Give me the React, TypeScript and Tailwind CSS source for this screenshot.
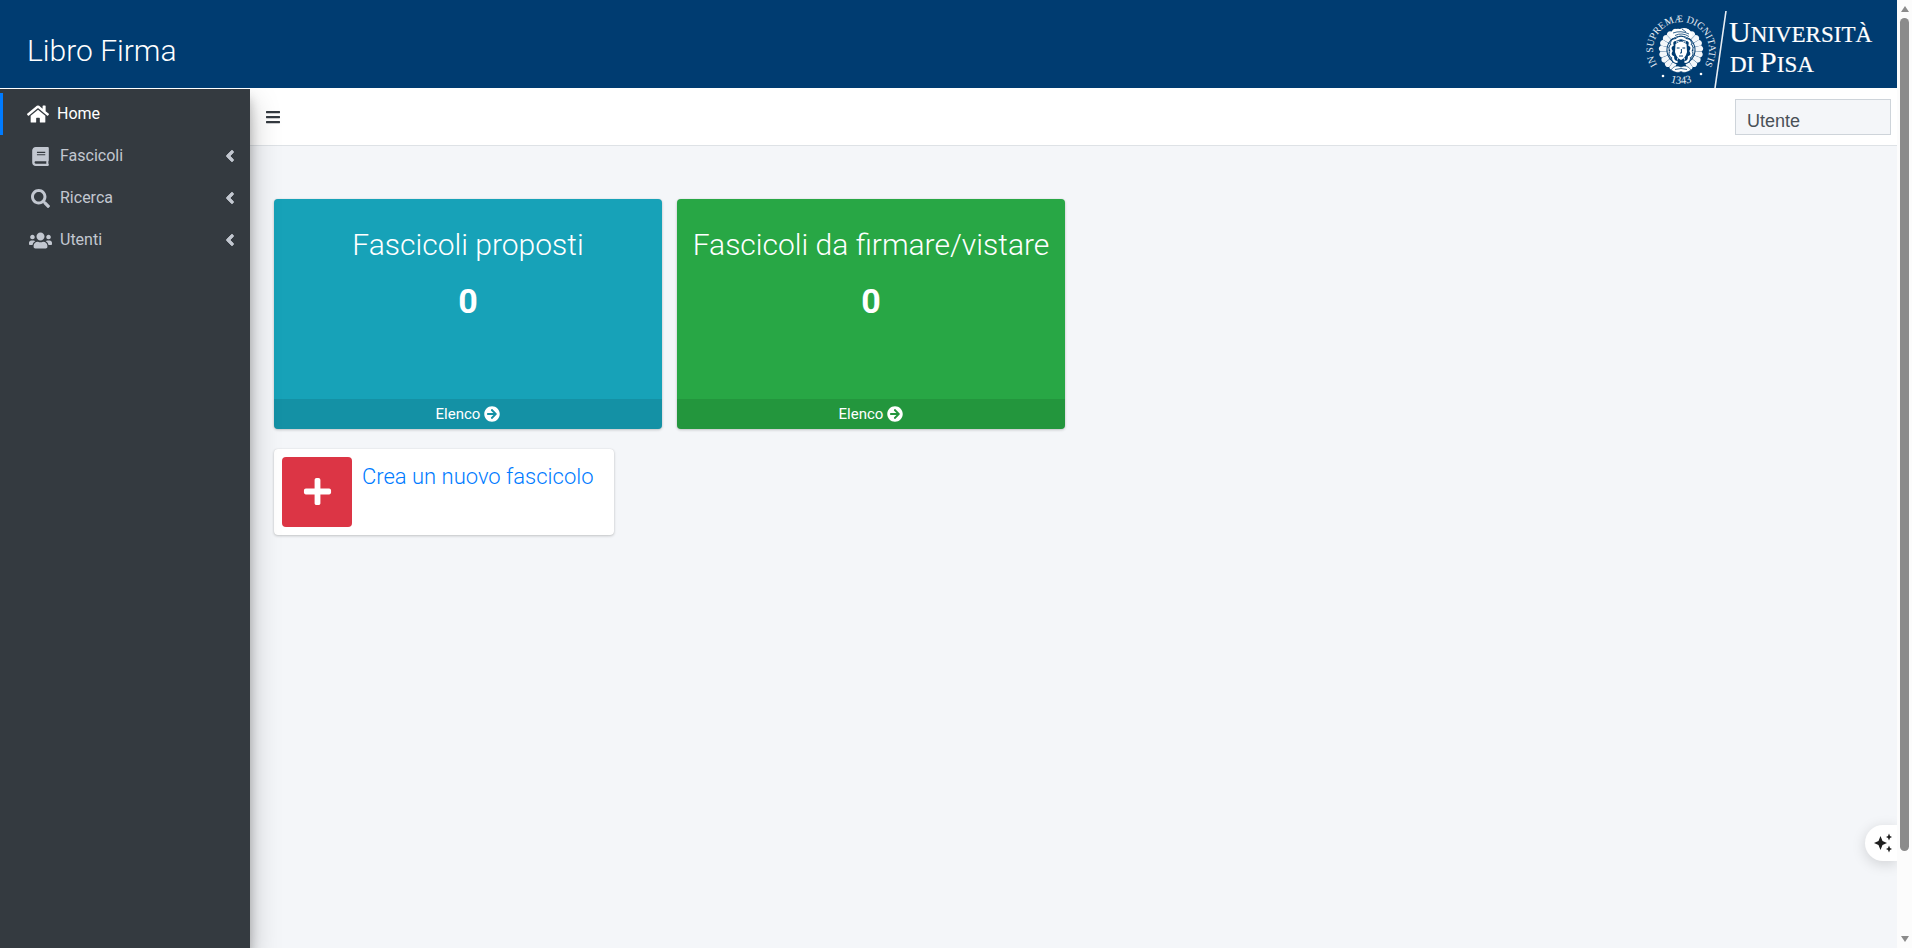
import { useState } from "react";
import {
  FaAngleLeft,
  FaArrowCircleRight,
  FaBars,
  FaBook,
  FaHome,
  FaPlus,
  FaSearch,
  FaUsers,
} from "react-icons/fa";

const menu = [
  { label: "Fascicoli", icon: FaBook, size: 19 },
  { label: "Ricerca", icon: FaSearch, size: 19 },
  { label: "Utenti", icon: FaUsers, size: 23 },
];

const boxes = [
  { title: "Fascicoli proposti", count: 0, color: "bg-[#17a2b8]" },
  { title: "Fascicoli da firmare/vistare", count: 0, color: "bg-[#28a745]" },
];

// feathers fan out from the centre of the seal on both sides
const feathers = [-72, -55, -38, -21, -4, 13, 30, 47, 64];

function Seal() {
  return (
    <g transform="translate(44 50)">
      <defs>
        <path id="motto" d="M-17 22.2 A28 28 0 1 1 17 22.2" />
        <path id="year" d="M-24 24 A34 34 0 0 0 24 24" />
      </defs>
      <text fontSize="10" fill="#e6edf4">
        <textPath href="#motto" startOffset="50%" textAnchor="middle">IN SUPREMÆ DIGNITATIS</textPath>
      </text>
      <text fontSize="11" fill="#e6edf4">
        <textPath href="#year" startOffset="50%" textAnchor="middle">1343</textPath>
      </text>
      <circle cx="-18" cy="26" r="1.3" fill="#fff" />
      <circle cx="20" cy="24" r="1.3" fill="#fff" />
      {[1, -1].map((side) => (
        <g key={side} transform={`scale(${side} 1)`}>
          {feathers.map((a) => (
            <g key={a} transform={`rotate(${a})`}>
              <path d="M14.5 -2 L20.5 -3 Q24 0 20.5 3 L14.5 2 Z" fill="#f4f7fa" />
              <path d="M8.5 -1.2 L13.5 -1.8 V1.8 L8.5 1.2 Z" fill="#f4f7fa" />
            </g>
          ))}
        </g>
      ))}
      <path d="M-11 -16 Q-8 -22 -1 -21 Q6 -24 11 -17 Q12 -13 8 -12 Q0 -17 -8 -12 Q-11 -13 -11 -16Z" fill="#fff" />
      <path d="M-8 -17 Q0 -20 8 -16 M-6 -14.5 Q1 -18 8 -13.5 M1 -21 L5 -18" fill="none" stroke="#003c71" strokeWidth="0.8" />
      <path
        d="M-5 -10 Q-10 -10 -8.5 -5 Q-12 -3 -9.5 1 Q-12 5 -8 7 Q-8 12 -3.5 12 M5 -10 Q10 -10 8.5 -5 Q12 -3 9.5 1 Q12 5 8 7 Q8 12 3.5 12 M-5 -10 Q0 -14 5 -10"
        fill="#003c71"
        stroke="#003c71"
        strokeWidth="4"
      />
      <path
        d="M-5 -10 Q-10 -10 -8.5 -5 Q-12 -3 -9.5 1 Q-12 5 -8 7 Q-8 12 -3.5 12 M5 -10 Q10 -10 8.5 -5 Q12 -3 9.5 1 Q12 5 8 7 Q8 12 3.5 12 M-5 -10 Q0 -14 5 -10"
        fill="none"
        stroke="#fff"
        strokeWidth="2.2"
      />
      <path d="M-5.5 -6 Q0 -11 5.5 -6 L6 2 Q4.5 8 0 10 Q-4.5 8 -6 2Z" fill="#fff" />
      <path d="M-4.2 -2 H-1.4 M1.4 -2 H4.2 M0.4 -1 V3 H-1 M-2 6 H2" fill="none" stroke="#003c71" strokeWidth="1" />
      <path d="M-10 20 Q-6 14 0 17 Q6 14 10 20 Q4 24 0 21.5 Q-4 24 -10 20Z" fill="#fff" stroke="#003c71" strokeWidth="0.6" />
      <path d="M-6 19.5 Q0 17.5 6 19.5" fill="none" stroke="#003c71" strokeWidth="0.8" />
    </g>
  );
}

function Logo() {
  return (
    <svg
      width="244"
      height="88"
      viewBox="0 0 244 88"
      role="img"
      aria-label="Università di Pisa"
      fontFamily="'Liberation Serif', serif"
    >
      <Seal />
      <path d="M89 11 L78 88" stroke="#e8eef4" strokeWidth="1.6" />
      <g fill="#fff" stroke="#fff" strokeWidth="0.2">
        <text x="92" y="42" fontSize="30">
          U<tspan fontSize="23">NIVERSITÀ</tspan>
        </text>
        <text x="93" y="72" fontSize="23">
          DI <tspan fontSize="30">P</tspan>ISA
        </text>
      </g>
    </svg>
  );
}

function Sidebar() {
  return (
    <aside className="z-10 w-[250px] shrink-0 bg-[#343a40] pt-1 text-[16px] text-[#c2c7d0] shadow-[0_14px_28px_rgba(0,0,0,0.25),0_10px_10px_rgba(0,0,0,0.22)]">
      <nav>
        <a href="#" className="flex h-[42px] items-center gap-2 border-l-[3px] border-[#007bff] pl-6 text-white">
          <FaHome size={22} />
          Home
        </a>
        {menu.map(({ label, icon: Icon, size }) => (
          <a key={label} href="#" className="flex h-[42px] items-center pr-[11px] pl-7">
            <span className="flex w-6 justify-center">
              <Icon size={size} />
            </span>
            <span className="ml-2 flex-1">{label}</span>
            <FaAngleLeft size={18} stroke="currentColor" strokeWidth={24} />
          </a>
        ))}
      </nav>
    </aside>
  );
}

function InfoBox({ title, count, color }: { title: string; count: number; color: string }) {
  return (
    <section
      className={`flex h-[230px] w-[388px] flex-col overflow-hidden rounded text-center text-white shadow-[0_0_1px_rgba(0,0,0,0.13),0_1px_3px_rgba(0,0,0,0.2)] ${color}`}
    >
      <div className="flex-1 pt-[26px]">
        <h3 className="text-[30px] leading-10 font-light">{title}</h3>
        <p className="mt-4 text-[34px] leading-10 font-bold">{count}</p>
      </div>
      <a href="#" className="flex h-[30px] items-center justify-center gap-1 bg-black/10 text-[15px]">
        Elenco <FaArrowCircleRight size={16} />
      </a>
    </section>
  );
}

function Scrollbar() {
  return (
    <div className="flex w-[15px] shrink-0 flex-col items-center bg-[#fcfcfc] py-[6px]">
      <svg width="8" height="6" viewBox="0 0 8 6">
        <path d="M4 0 L8 6 H0Z" fill="#8b8b8b" />
      </svg>
      <div className="mt-[6px] h-[89%] w-[9px] rounded-full bg-[#8b8b8b]" />
      <svg className="mt-auto" width="8" height="6" viewBox="0 0 8 6">
        <path d="M4 6 L8 0 H0Z" fill="#8b8b8b" />
      </svg>
    </div>
  );
}

export default function App() {
  const [open, setOpen] = useState(true);

  return (
    <div className="flex min-h-screen bg-[#f4f6f9] font-[Roboto,sans-serif]">
      <div className="relative flex min-w-0 flex-1 flex-col overflow-hidden">
        <header className="z-20 flex h-[89px] shrink-0 items-center justify-between border-b border-white bg-[#003c71] pr-4 pl-[27px]">
          <h1 className="pt-3 text-[30px] font-light text-white">Libro Firma</h1>
          <Logo />
        </header>

        <div className="flex flex-1">
          {open && <Sidebar />}
          <div className="flex-1">
            <div className="flex h-[57px] items-center justify-between border-b border-[#dee2e6] bg-white pr-[6px] pl-[15px]">
              <button type="button" aria-label="Menu" onClick={() => setOpen(!open)}>
                <FaBars size={16} className="text-[#343a40]" />
              </button>
              <input
                type="text"
                aria-label="Utente"
                defaultValue="Utente"
                className="h-9 w-[156px] border border-[#ced4da] bg-[#f4f6f9] px-[11px] pt-2 font-[Liberation_Sans,sans-serif] text-[18px] text-[#495057]"
              />
            </div>

            <main className="px-6 pt-[53px]">
              <div className="flex flex-wrap gap-[15px]">
                {boxes.map((box) => (
                  <InfoBox key={box.title} {...box} />
                ))}
              </div>
              <a
                href="#"
                className="mt-5 flex w-[340px] gap-[10px] rounded bg-white p-2 text-[#007bff] shadow-[0_0_1px_rgba(0,0,0,0.13),0_1px_3px_rgba(0,0,0,0.2)]"
              >
                <span className="flex size-[70px] shrink-0 items-center justify-center rounded bg-[#dc3545] pb-0.5 text-white">
                  <FaPlus size={31} />
                </span>
                <span className="text-[22px] leading-10 font-light whitespace-nowrap">Crea un nuovo fascicolo</span>
              </a>
            </main>
          </div>
        </div>

        <button
          type="button"
          aria-label="Assistente"
          className="absolute right-0 bottom-[87px] flex h-9 w-8 items-center rounded-l-full bg-white pl-[9px] shadow-[0_3px_14px_rgba(0,0,0,0.15)]"
        >
          <svg width="18" height="20" viewBox="0 0 18 20" fill="#1f1f1f">
            <path d="M6.5 3 L8.5 8 L13 10 L8.5 12 L6.5 17 L4.5 12 L0 10 L4.5 8Z" />
            <path d="M15 0.5 L16 3 L18 4 L16 5 L15 7.5 L14 5 L12 4 L14 3Z" />
            <path d="M15 12.5 L16 15 L18 16 L16 17 L15 19.5 L14 17 L12 16 L14 15Z" />
          </svg>
        </button>
      </div>
      <Scrollbar />
    </div>
  );
}
